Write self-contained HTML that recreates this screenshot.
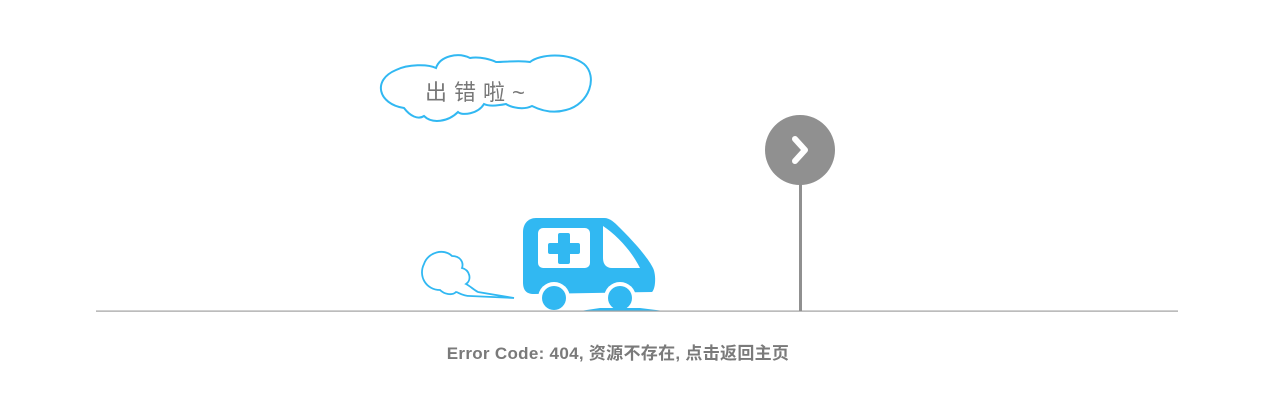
<!DOCTYPE html>
<html><head><meta charset="utf-8"><style>
body{margin:0;width:1280px;height:414px;background:#fff;overflow:hidden;position:relative}
svg{position:absolute;left:0;top:0}
.t{position:absolute;left:0;width:1236px;top:339px;text-align:center;font:bold 17px "Liberation Sans","Noto Sans CJK SC",sans-serif;color:#7a7a7a;letter-spacing:0.3px}
</style></head><body>
<svg width="1280" height="414" viewBox="0 0 1280 414">
<path d="M404 108 C378 104 372 80 396 70 C408 64 428 64 436 68 C440 56 458 52 470 58 C480 56 492 60 496 62 C506 62 520 60 530 62 C540 54 568 52 584 64 C598 76 590 104 566 110 C552 114 540 110 532 106 C524 110 512 108 506 104 C496 106 488 106 484 104 C478 114 462 116 458 112 C448 122 432 124 424 116 C418 120 410 116 404 108 Z" fill="#fff" stroke="#31b8f2" stroke-width="2"/>
<text x="425" y="100" font-family="Liberation Sans,Noto Sans CJK SC,sans-serif" font-size="22" fill="#777" letter-spacing="7">出错啦~</text>
<path d="M440 290 C426 290 418 276 424 264 C428 252 444 248 452 256 C460 256 464 262 462 268 C470 270 472 280 466 284 C470 286 474 290 478 292 L514 298 L470 296 C462 296 458 292 456 292 C452 296 444 294 440 290 Z" fill="#fff" stroke="#31b8f2" stroke-width="1.8"/>
<path d="M536 218 L604 218 C610 218 614 222 620 228 C636 244 648 258 653 268 C656 274 656 288 652 292 L534 294 C526 294 523 290 523 282 L523 232 C523 224 528 218 536 218 Z" fill="#31b8f2"/>
<rect x="538" y="228" width="52" height="40" rx="5" fill="#fff"/>
<path d="M560 233 h8 a2 2 0 0 1 2 2 v8 h8 a2 2 0 0 1 2 2 v7 a2 2 0 0 1 -2 2 h-8 v8 a2 2 0 0 1 -2 2 h-8 a2 2 0 0 1 -2 -2 v-8 h-8 a2 2 0 0 1 -2 -2 v-7 a2 2 0 0 1 2 -2 h8 v-8 a2 2 0 0 1 2 -2z" fill="#31b8f2"/>
<path d="M603 226 C618 236 632 252 640 268 L612 268 C606 268 603 264 603 258 Z" fill="#fff"/>
<circle cx="554" cy="298" r="16" fill="#fff"/>
<circle cx="620" cy="298" r="16" fill="#fff"/>
<circle cx="554" cy="298" r="12" fill="#31b8f2"/>
<circle cx="620" cy="298" r="12" fill="#31b8f2"/>
<path d="M580 311 L600 308 L640 308 L664 311 Z" fill="#31b8f2"/>
<rect x="96" y="310.5" width="1082" height="1.2" fill="#a0a0a0"/>
<rect x="799" y="180" width="3" height="131" fill="#909090"/>
<circle cx="800" cy="150" r="35" fill="#909090"/>
<path d="M795 139 L805 150 L795 161" fill="none" stroke="#fff" stroke-width="6" stroke-linecap="round" stroke-linejoin="round"/>
</svg>
<div class="t">Error Code: 404, 资源不存在, 点击返回主页</div>
</body></html>
